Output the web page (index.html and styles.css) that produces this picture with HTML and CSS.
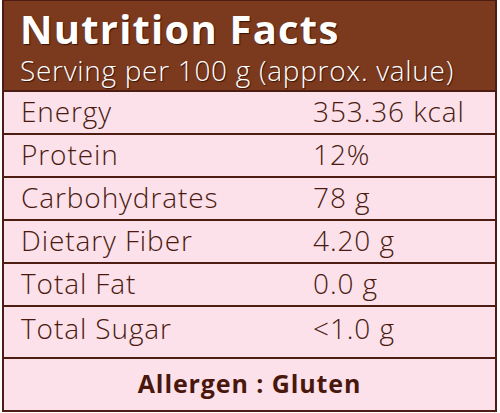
FILE: index.html
```html
<!DOCTYPE html>
<html lang="en">
<head>
    <meta charset="UTF-8">
    <meta name="viewport" content="width=device-width, initial-scale=1.0">
    <title>Nutrition Facts</title>
    <link rel="stylesheet" href="styles.css">
</head>
<body>
    <div class="label">
        <div class="head">
            <h1>Nutrition Facts</h1>
            <p class="serving">Serving per 100 g (approx. value)</p>
        </div>
        <div class="row"><span>Energy</span><span>353.36 kcal</span></div>
        <div class="row"><span>Protein</span><span>12%</span></div>
        <div class="row"><span>Carbohydrates</span><span>78 g</span></div>
        <div class="row"><span>Dietary Fiber</span><span>4.20 g</span></div>
        <div class="row"><span>Total Fat</span><span>0.0 g</span></div>
        <div class="row tall"><span>Total Sugar</span><span>&lt;1.0 g</span></div>
        <div class="allergen">Allergen : Gluten</div>
    </div>
</body>
</html>
```

FILE: styles.css
```css
*{
    margin:0;
    padding:0;
    box-sizing: border-box;
}
body{
    width: 500px;
    height: 413px;
    background-color: #ffffff;
    font-family: "Open Sans", "Lato", sans-serif;
    padding: 0 3px 0 2px;
}
.label{
    height: 412px;
    border: 2px solid #4d1c12;
    border-top-width: 1px;
    background-color: #fce1ea;
    color: #4a1a10;
}
.head{
    height: 89px;
    background-color: #7b3a1d;
    color: #ffffff;
    padding-left: 16px;
    text-shadow: 1px 1px 1px #3b1308;
}
h1{
    font-size: 40px;
    font-weight: 700;
    line-height: normal;
    letter-spacing: 1.2px;
}
.serving{
    font-size: 28px;
    font-weight: 300;
    line-height: 36px;
    letter-spacing: 0.7px;
    margin-top: -4px;
}
.row{
    height: 43px;
    display: grid;
    grid-template-columns: 292px 1fr;
    align-items: center;
    padding-left: 17px;
    padding-bottom: 3px;
    font-size: 28px;
    font-weight: 300;
    letter-spacing: 0.9px;
    border-top: 2px solid #4d1c12;
}
.row.tall{
    height: 52px;
    padding-bottom: 8px;
}
.allergen{
    height: 52px;
    border-top: 2px solid #4d1c12;
    display: flex;
    align-items: center;
    justify-content: center;
    padding-bottom: 2px;
    font-size: 25px;
    font-weight: 700;
    letter-spacing: 0.9px;
    color: #4a170c;
}
```
